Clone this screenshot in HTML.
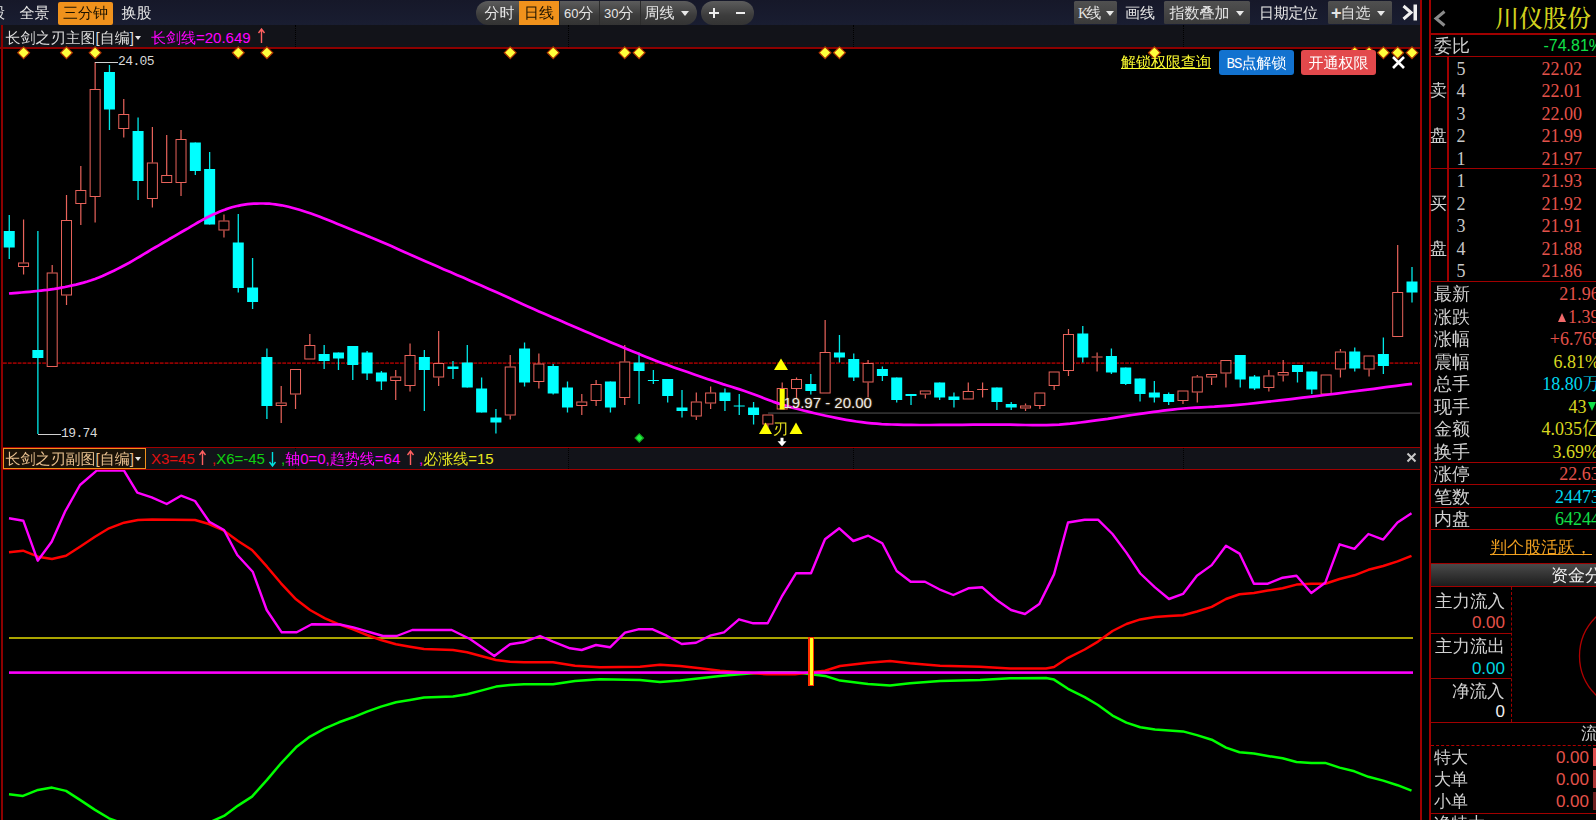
<!DOCTYPE html><html lang="zh"><head><meta charset="utf-8"><title>K线</title><style>
*{margin:0;padding:0;box-sizing:border-box}
html,body{width:1596px;height:820px;background:#000;overflow:hidden}
body{position:relative;font-family:"Liberation Sans","WenQuanYi Zen Hei","Noto Sans CJK SC",sans-serif;color:#d8d8d8;font-size:16px;line-height:1}
.abs{position:absolute;white-space:nowrap}
.t{position:absolute;white-space:nowrap;font-size:15px;line-height:20px;height:20px}
.hl{position:absolute;background:#a00000;height:1px}
.vl{position:absolute;background:#a00000;width:1px}
.gbtn{position:absolute;top:1px;height:23px;background:linear-gradient(#505050,#3a3a3a);border-radius:1.5px;color:#e4e4e4;font-size:15px;line-height:24px;padding-left:6px;white-space:nowrap}
.caret{display:inline-block;width:0;height:0;border-left:4.5px solid transparent;border-right:4.5px solid transparent;border-top:5px solid #e8e8e8;vertical-align:middle;margin-left:6px;position:relative;top:-1px}
.ser{font-family:"Liberation Serif","Noto Serif CJK SC",serif}
.rp .lab{position:absolute;left:1434px;font-size:18px;line-height:22px;color:#d0d0d0;white-space:nowrap}
.rp .val{position:absolute;right:0;font-size:18px;line-height:22px;white-space:nowrap;font-family:"Liberation Serif","Noto Serif CJK SC",serif}
.rp .num{position:absolute;left:1456.5px;font-size:18px;line-height:22px;color:#c8c8c8;font-family:"Liberation Serif",serif}
</style></head><body>
<div class="abs" style="left:0;top:0;width:1420px;height:25px;background:linear-gradient(#161829,#191d31)"></div>
<div class="abs" style="left:0;top:25px;width:1420px;height:22px;background:#121319"></div>
<div class="abs" style="left:3px;top:448px;width:1417px;height:21px;background:#121319"></div>
<svg width="1596" height="820" viewBox="0 0 1596 820" style="position:absolute;left:0;top:0"><defs><clipPath id="subclip"><rect x="0" y="469" width="1420" height="351"/></clipPath></defs><line x1="3" x2="1420" y1="363.1" y2="363.1" stroke="#900000" stroke-width="1.8" stroke-dasharray="3.8 1.1"/>
<rect x="768" y="412.2" width="652" height="1.8" fill="#2e2e2e"/>
<g><rect x="8.60" y="215.0" width="1.3" height="44.0" fill="#00e8e8"/><rect x="3.75" y="231.0" width="11" height="16.5" fill="#00ffff"/><rect x="22.96" y="219.5" width="1.2" height="43.0" fill="#e8635b"/><rect x="22.96" y="267.0" width="1.2" height="7.5" fill="#e8635b"/><rect x="18.56" y="263.0" width="10" height="3.5" fill="#000" stroke="#e8635b" stroke-width="1"/><rect x="37.23" y="231.0" width="1.3" height="203.0" fill="#00e8e8"/><rect x="32.38" y="350.0" width="11" height="8.0" fill="#00ffff"/><rect x="51.59" y="265.0" width="1.2" height="7.5" fill="#e8635b"/><rect x="47.19" y="273.0" width="10" height="93.5" fill="#000" stroke="#e8635b" stroke-width="1"/><rect x="65.91" y="195.0" width="1.2" height="25.0" fill="#e8635b"/><rect x="65.91" y="295.5" width="1.2" height="9.5" fill="#e8635b"/><rect x="61.51" y="220.5" width="10" height="74.5" fill="#000" stroke="#e8635b" stroke-width="1"/><rect x="80.22" y="166.0" width="1.2" height="24.0" fill="#e8635b"/><rect x="80.22" y="204.0" width="1.2" height="21.0" fill="#e8635b"/><rect x="75.82" y="190.5" width="10" height="13.0" fill="#000" stroke="#e8635b" stroke-width="1"/><rect x="94.53" y="62.0" width="1.2" height="27.0" fill="#e8635b"/><rect x="94.53" y="197.0" width="1.2" height="25.5" fill="#e8635b"/><rect x="90.13" y="89.5" width="10" height="107.0" fill="#000" stroke="#e8635b" stroke-width="1"/><rect x="108.80" y="65.0" width="1.3" height="65.0" fill="#00e8e8"/><rect x="103.95" y="72.0" width="11" height="37.5" fill="#00ffff"/><rect x="123.16" y="99.0" width="1.2" height="15.0" fill="#e8635b"/><rect x="123.16" y="129.0" width="1.2" height="8.5" fill="#e8635b"/><rect x="118.76" y="114.5" width="10" height="14.0" fill="#000" stroke="#e8635b" stroke-width="1"/><rect x="137.42" y="117.5" width="1.3" height="82.5" fill="#00e8e8"/><rect x="132.57" y="131.0" width="11" height="50.0" fill="#00ffff"/><rect x="151.79" y="127.0" width="1.2" height="35.5" fill="#e8635b"/><rect x="151.79" y="199.0" width="1.2" height="8.5" fill="#e8635b"/><rect x="147.39" y="163.0" width="10" height="35.5" fill="#000" stroke="#e8635b" stroke-width="1"/><rect x="166.10" y="135.0" width="1.2" height="40.0" fill="#e8635b"/><rect x="161.70" y="175.5" width="10" height="7.0" fill="#000" stroke="#e8635b" stroke-width="1"/><rect x="180.42" y="130.0" width="1.2" height="9.0" fill="#e8635b"/><rect x="180.42" y="183.0" width="1.2" height="13.0" fill="#e8635b"/><rect x="176.02" y="139.5" width="10" height="43.0" fill="#000" stroke="#e8635b" stroke-width="1"/><rect x="194.68" y="142.5" width="1.3" height="32.5" fill="#00e8e8"/><rect x="189.83" y="142.5" width="11" height="28.5" fill="#00ffff"/><rect x="208.99" y="152.0" width="1.3" height="72.5" fill="#00e8e8"/><rect x="204.14" y="169.0" width="11" height="55.5" fill="#00ffff"/><rect x="223.36" y="214.5" width="1.2" height="6.0" fill="#e8635b"/><rect x="223.36" y="230.5" width="1.2" height="7.0" fill="#e8635b"/><rect x="218.96" y="221.0" width="10" height="9.0" fill="#000" stroke="#e8635b" stroke-width="1"/><rect x="237.62" y="214.0" width="1.3" height="78.5" fill="#00e8e8"/><rect x="232.77" y="242.5" width="11" height="45.5" fill="#00ffff"/><rect x="251.93" y="258.0" width="1.3" height="51.0" fill="#00e8e8"/><rect x="247.08" y="287.5" width="11" height="14.5" fill="#00ffff"/><rect x="266.25" y="348.5" width="1.3" height="70.5" fill="#00e8e8"/><rect x="261.40" y="357.0" width="11" height="49.0" fill="#00ffff"/><rect x="280.61" y="386.0" width="1.2" height="16.5" fill="#e8635b"/><rect x="280.61" y="406.0" width="1.2" height="17.0" fill="#e8635b"/><rect x="276.21" y="403.0" width="10" height="2.5" fill="#000" stroke="#e8635b" stroke-width="1"/><rect x="294.93" y="394.5" width="1.2" height="14.5" fill="#e8635b"/><rect x="290.53" y="369.5" width="10" height="24.5" fill="#000" stroke="#e8635b" stroke-width="1"/><rect x="309.24" y="334.0" width="1.2" height="11.0" fill="#e8635b"/><rect x="304.84" y="345.5" width="10" height="13.5" fill="#000" stroke="#e8635b" stroke-width="1"/><rect x="323.50" y="345.0" width="1.3" height="24.0" fill="#00e8e8"/><rect x="318.65" y="354.0" width="11" height="7.0" fill="#00ffff"/><rect x="337.82" y="352.5" width="1.3" height="17.5" fill="#00e8e8"/><rect x="332.97" y="352.5" width="11" height="6.0" fill="#00ffff"/><rect x="352.13" y="346.0" width="1.3" height="34.0" fill="#00e8e8"/><rect x="347.28" y="346.0" width="11" height="19.0" fill="#00ffff"/><rect x="366.45" y="351.0" width="1.3" height="29.0" fill="#00e8e8"/><rect x="361.60" y="352.5" width="11" height="21.0" fill="#00ffff"/><rect x="380.76" y="371.0" width="1.3" height="19.0" fill="#00e8e8"/><rect x="375.91" y="372.5" width="11" height="9.0" fill="#00ffff"/><rect x="395.12" y="370.0" width="1.2" height="6.5" fill="#e8635b"/><rect x="395.12" y="381.0" width="1.2" height="19.0" fill="#e8635b"/><rect x="390.72" y="377.0" width="10" height="3.5" fill="#000" stroke="#e8635b" stroke-width="1"/><rect x="409.44" y="343.5" width="1.2" height="11.5" fill="#e8635b"/><rect x="409.44" y="386.0" width="1.2" height="5.5" fill="#e8635b"/><rect x="405.04" y="355.5" width="10" height="30.0" fill="#000" stroke="#e8635b" stroke-width="1"/><rect x="423.70" y="350.0" width="1.3" height="61.0" fill="#00e8e8"/><rect x="418.85" y="357.0" width="11" height="13.0" fill="#00ffff"/><rect x="438.06" y="331.0" width="1.2" height="32.0" fill="#e8635b"/><rect x="438.06" y="377.5" width="1.2" height="8.5" fill="#e8635b"/><rect x="433.66" y="363.5" width="10" height="13.5" fill="#000" stroke="#e8635b" stroke-width="1"/><rect x="452.33" y="361.0" width="1.3" height="18.0" fill="#00e8e8"/><rect x="447.48" y="366.5" width="11" height="2.5" fill="#00ffff"/><rect x="466.64" y="345.0" width="1.3" height="42.5" fill="#00e8e8"/><rect x="461.79" y="362.5" width="11" height="25.0" fill="#00ffff"/><rect x="480.96" y="377.5" width="1.3" height="35.0" fill="#00e8e8"/><rect x="476.11" y="388.5" width="11" height="24.0" fill="#00ffff"/><rect x="495.27" y="409.0" width="1.3" height="24.5" fill="#00e8e8"/><rect x="490.42" y="417.5" width="11" height="5.0" fill="#00ffff"/><rect x="509.63" y="355.0" width="1.2" height="11.5" fill="#e8635b"/><rect x="509.63" y="415.5" width="1.2" height="4.0" fill="#e8635b"/><rect x="505.23" y="367.0" width="10" height="48.0" fill="#000" stroke="#e8635b" stroke-width="1"/><rect x="523.90" y="342.5" width="1.3" height="44.0" fill="#00e8e8"/><rect x="519.05" y="348.5" width="11" height="34.0" fill="#00ffff"/><rect x="538.26" y="353.5" width="1.2" height="10.0" fill="#e8635b"/><rect x="538.26" y="382.0" width="1.2" height="6.5" fill="#e8635b"/><rect x="533.86" y="364.0" width="10" height="17.5" fill="#000" stroke="#e8635b" stroke-width="1"/><rect x="552.52" y="364.0" width="1.3" height="30.5" fill="#00e8e8"/><rect x="547.67" y="366.0" width="11" height="27.5" fill="#00ffff"/><rect x="566.84" y="381.5" width="1.3" height="31.0" fill="#00e8e8"/><rect x="561.99" y="387.5" width="11" height="20.0" fill="#00ffff"/><rect x="581.20" y="394.0" width="1.2" height="7.5" fill="#e8635b"/><rect x="581.20" y="406.0" width="1.2" height="9.0" fill="#e8635b"/><rect x="576.80" y="402.0" width="10" height="3.5" fill="#000" stroke="#e8635b" stroke-width="1"/><rect x="595.52" y="380.0" width="1.2" height="4.0" fill="#e8635b"/><rect x="595.52" y="401.0" width="1.2" height="5.0" fill="#e8635b"/><rect x="591.12" y="384.5" width="10" height="16.0" fill="#000" stroke="#e8635b" stroke-width="1"/><rect x="609.78" y="381.5" width="1.3" height="31.0" fill="#00e8e8"/><rect x="604.93" y="381.5" width="11" height="26.0" fill="#00ffff"/><rect x="624.14" y="345.0" width="1.2" height="16.5" fill="#e8635b"/><rect x="624.14" y="398.0" width="1.2" height="7.0" fill="#e8635b"/><rect x="619.74" y="362.0" width="10" height="35.5" fill="#000" stroke="#e8635b" stroke-width="1"/><rect x="638.41" y="352.5" width="1.3" height="51.5" fill="#00e8e8"/><rect x="633.56" y="362.5" width="11" height="8.5" fill="#00ffff"/><rect x="652.72" y="370.0" width="1.3" height="14.0" fill="#00e8e8"/><rect x="647.87" y="380.0" width="11" height="1.0" fill="#00ffff"/><rect x="667.03" y="379.0" width="1.3" height="23.5" fill="#00e8e8"/><rect x="662.18" y="379.0" width="11" height="17.0" fill="#00ffff"/><rect x="681.35" y="390.0" width="1.3" height="27.5" fill="#00e8e8"/><rect x="676.50" y="407.5" width="11" height="3.5" fill="#00ffff"/><rect x="695.71" y="392.5" width="1.2" height="9.0" fill="#e8635b"/><rect x="695.71" y="416.5" width="1.2" height="3.5" fill="#e8635b"/><rect x="691.31" y="402.0" width="10" height="14.0" fill="#000" stroke="#e8635b" stroke-width="1"/><rect x="710.03" y="386.5" width="1.2" height="6.0" fill="#e8635b"/><rect x="710.03" y="403.5" width="1.2" height="5.5" fill="#e8635b"/><rect x="705.63" y="393.0" width="10" height="10.0" fill="#000" stroke="#e8635b" stroke-width="1"/><rect x="724.29" y="388.5" width="1.3" height="22.5" fill="#00e8e8"/><rect x="719.44" y="392.5" width="11" height="8.5" fill="#00ffff"/><rect x="738.60" y="394.0" width="1.3" height="21.0" fill="#00e8e8"/><rect x="733.75" y="405.5" width="11" height="1.0" fill="#00ffff"/><rect x="752.92" y="402.0" width="1.3" height="22.5" fill="#00e8e8"/><rect x="748.07" y="407.5" width="11" height="7.5" fill="#00ffff"/><rect x="767.28" y="424.5" width="1.2" height="6.0" fill="#e8635b"/><rect x="762.88" y="415.0" width="10" height="9.0" fill="#000" stroke="#e8635b" stroke-width="1"/><rect x="781.60" y="382.5" width="1.2" height="5.5" fill="#e8635b"/><rect x="777.20" y="388.5" width="10" height="20.5" fill="#000" stroke="#e8635b" stroke-width="1"/><rect x="795.91" y="377.5" width="1.2" height="1.5" fill="#e8635b"/><rect x="795.91" y="389.0" width="1.2" height="10.0" fill="#e8635b"/><rect x="791.51" y="379.5" width="10" height="9.0" fill="#000" stroke="#e8635b" stroke-width="1"/><rect x="810.17" y="374.0" width="1.3" height="20.5" fill="#00e8e8"/><rect x="805.32" y="384.0" width="11" height="7.0" fill="#00ffff"/><rect x="824.54" y="320.0" width="1.2" height="32.0" fill="#e8635b"/><rect x="820.14" y="352.5" width="10" height="40.5" fill="#000" stroke="#e8635b" stroke-width="1"/><rect x="838.80" y="335.0" width="1.3" height="27.5" fill="#00e8e8"/><rect x="833.95" y="352.5" width="11" height="5.0" fill="#00ffff"/><rect x="853.11" y="353.5" width="1.3" height="27.5" fill="#00e8e8"/><rect x="848.26" y="359.0" width="11" height="18.5" fill="#00ffff"/><rect x="867.48" y="360.0" width="1.2" height="3.0" fill="#e8635b"/><rect x="867.48" y="382.5" width="1.2" height="15.0" fill="#e8635b"/><rect x="863.08" y="363.5" width="10" height="18.5" fill="#000" stroke="#e8635b" stroke-width="1"/><rect x="881.74" y="366.5" width="1.3" height="14.5" fill="#00e8e8"/><rect x="876.89" y="369.0" width="11" height="7.0" fill="#00ffff"/><rect x="896.06" y="377.5" width="1.3" height="25.0" fill="#00e8e8"/><rect x="891.21" y="377.5" width="11" height="22.5" fill="#00ffff"/><rect x="910.37" y="394.0" width="1.3" height="11.0" fill="#00e8e8"/><rect x="905.52" y="394.0" width="11" height="2.0" fill="#00ffff"/><rect x="924.73" y="394.5" width="1.2" height="4.0" fill="#e8635b"/><rect x="920.33" y="391.0" width="10" height="3.0" fill="#000" stroke="#e8635b" stroke-width="1"/><rect x="939.00" y="382.5" width="1.3" height="17.5" fill="#00e8e8"/><rect x="934.15" y="382.5" width="11" height="15.0" fill="#00ffff"/><rect x="953.31" y="392.5" width="1.3" height="15.0" fill="#00e8e8"/><rect x="948.46" y="396.5" width="11" height="3.5" fill="#00ffff"/><rect x="967.67" y="382.5" width="1.2" height="8.5" fill="#e8635b"/><rect x="963.27" y="391.5" width="10" height="7.5" fill="#000" stroke="#e8635b" stroke-width="1"/><rect x="981.99" y="382.5" width="1.2" height="6.5" fill="#e8635b"/><rect x="981.99" y="390.0" width="1.2" height="7.5" fill="#e8635b"/><rect x="977.09" y="389.0" width="11" height="1.0" fill="#e8635b"/><rect x="996.25" y="387.5" width="1.3" height="22.5" fill="#00e8e8"/><rect x="991.40" y="387.5" width="11" height="14.5" fill="#00ffff"/><rect x="1010.57" y="402.0" width="1.3" height="8.0" fill="#00e8e8"/><rect x="1005.72" y="404.0" width="11" height="3.5" fill="#00ffff"/><rect x="1024.93" y="403.5" width="1.2" height="2.0" fill="#e8635b"/><rect x="1024.93" y="408.5" width="1.2" height="2.5" fill="#e8635b"/><rect x="1020.53" y="406.0" width="10" height="2.0" fill="#000" stroke="#e8635b" stroke-width="1"/><rect x="1039.24" y="406.0" width="1.2" height="3.0" fill="#e8635b"/><rect x="1034.84" y="393.0" width="10" height="12.5" fill="#000" stroke="#e8635b" stroke-width="1"/><rect x="1053.56" y="386.0" width="1.2" height="4.0" fill="#e8635b"/><rect x="1049.16" y="372.0" width="10" height="13.5" fill="#000" stroke="#e8635b" stroke-width="1"/><rect x="1067.87" y="329.0" width="1.2" height="5.0" fill="#e8635b"/><rect x="1067.87" y="371.0" width="1.2" height="5.0" fill="#e8635b"/><rect x="1063.47" y="334.5" width="10" height="36.0" fill="#000" stroke="#e8635b" stroke-width="1"/><rect x="1082.13" y="326.0" width="1.3" height="36.5" fill="#00e8e8"/><rect x="1077.29" y="333.5" width="11" height="24.0" fill="#00ffff"/><rect x="1096.50" y="352.5" width="1.2" height="4.0" fill="#e8635b"/><rect x="1096.50" y="357.5" width="1.2" height="14.0" fill="#e8635b"/><rect x="1091.60" y="356.5" width="11" height="1.0" fill="#e8635b"/><rect x="1110.76" y="348.5" width="1.3" height="25.5" fill="#00e8e8"/><rect x="1105.91" y="356.0" width="11" height="16.5" fill="#00ffff"/><rect x="1125.08" y="367.5" width="1.3" height="17.5" fill="#00e8e8"/><rect x="1120.23" y="367.5" width="11" height="16.5" fill="#00ffff"/><rect x="1139.39" y="378.5" width="1.3" height="23.0" fill="#00e8e8"/><rect x="1134.54" y="378.5" width="11" height="15.5" fill="#00ffff"/><rect x="1153.70" y="381.0" width="1.3" height="21.5" fill="#00e8e8"/><rect x="1148.85" y="392.5" width="11" height="5.0" fill="#00ffff"/><rect x="1168.02" y="392.5" width="1.3" height="12.5" fill="#00e8e8"/><rect x="1163.17" y="394.0" width="11" height="8.0" fill="#00ffff"/><rect x="1182.38" y="401.0" width="1.2" height="3.0" fill="#e8635b"/><rect x="1177.98" y="391.0" width="10" height="9.5" fill="#000" stroke="#e8635b" stroke-width="1"/><rect x="1196.70" y="375.0" width="1.2" height="1.5" fill="#e8635b"/><rect x="1196.70" y="392.5" width="1.2" height="10.0" fill="#e8635b"/><rect x="1192.30" y="377.0" width="10" height="15.0" fill="#000" stroke="#e8635b" stroke-width="1"/><rect x="1211.01" y="377.5" width="1.2" height="7.5" fill="#e8635b"/><rect x="1206.61" y="374.5" width="10" height="2.5" fill="#000" stroke="#e8635b" stroke-width="1"/><rect x="1225.32" y="373.5" width="1.2" height="14.0" fill="#e8635b"/><rect x="1220.92" y="360.5" width="10" height="12.5" fill="#000" stroke="#e8635b" stroke-width="1"/><rect x="1239.59" y="355.0" width="1.3" height="32.5" fill="#00e8e8"/><rect x="1234.74" y="355.0" width="11" height="24.5" fill="#00ffff"/><rect x="1253.90" y="375.0" width="1.3" height="15.0" fill="#00e8e8"/><rect x="1249.05" y="376.5" width="11" height="12.0" fill="#00ffff"/><rect x="1268.26" y="370.0" width="1.2" height="5.5" fill="#e8635b"/><rect x="1268.26" y="388.0" width="1.2" height="3.5" fill="#e8635b"/><rect x="1263.86" y="376.0" width="10" height="11.5" fill="#000" stroke="#e8635b" stroke-width="1"/><rect x="1282.58" y="360.0" width="1.2" height="12.0" fill="#e8635b"/><rect x="1282.58" y="375.5" width="1.2" height="6.0" fill="#e8635b"/><rect x="1278.18" y="372.5" width="10" height="2.5" fill="#000" stroke="#e8635b" stroke-width="1"/><rect x="1296.84" y="365.0" width="1.3" height="17.5" fill="#00e8e8"/><rect x="1291.99" y="365.0" width="11" height="7.0" fill="#00ffff"/><rect x="1311.16" y="371.5" width="1.3" height="22.5" fill="#00e8e8"/><rect x="1306.31" y="371.5" width="11" height="18.0" fill="#00ffff"/><rect x="1321.12" y="375.0" width="10" height="19.0" fill="#000" stroke="#e8635b" stroke-width="1"/><rect x="1339.83" y="349.0" width="1.2" height="2.5" fill="#e8635b"/><rect x="1339.83" y="369.5" width="1.2" height="8.0" fill="#e8635b"/><rect x="1335.43" y="352.0" width="10" height="17.0" fill="#000" stroke="#e8635b" stroke-width="1"/><rect x="1354.10" y="347.5" width="1.3" height="24.0" fill="#00e8e8"/><rect x="1349.25" y="351.5" width="11" height="17.0" fill="#00ffff"/><rect x="1368.46" y="369.5" width="1.2" height="7.0" fill="#e8635b"/><rect x="1364.06" y="356.0" width="10" height="13.0" fill="#000" stroke="#e8635b" stroke-width="1"/><rect x="1382.72" y="337.5" width="1.3" height="36.5" fill="#00e8e8"/><rect x="1377.87" y="354.0" width="11" height="12.0" fill="#00ffff"/><rect x="1397.09" y="245.0" width="1.2" height="47.0" fill="#e8635b"/><rect x="1392.69" y="292.5" width="10" height="44.0" fill="#000" stroke="#e8635b" stroke-width="1"/><rect x="1411.35" y="267.0" width="1.3" height="35.5" fill="#00e8e8"/><rect x="1406.50" y="281.5" width="11" height="11.0" fill="#00ffff"/></g>
<polyline fill="none" stroke="#ff00ff" stroke-width="2.7" stroke-linejoin="round" points="9.0,293.5 11.2,293.3 14.1,293.1 17.6,292.8 21.5,292.5 25.6,292.2 29.8,291.8 33.8,291.4 37.5,291.0 41.0,290.6 44.4,290.2 47.8,289.8 51.2,289.3 54.5,288.9 58.0,288.3 61.4,287.7 65.0,287.0 68.6,286.2 72.3,285.4 76.1,284.6 79.8,283.6 83.6,282.6 87.4,281.5 91.2,280.3 95.0,279.0 98.8,277.6 102.5,276.0 106.2,274.3 110.0,272.6 113.8,270.8 117.5,268.9 121.2,267.0 125.0,265.0 128.8,263.0 132.5,260.9 136.2,258.7 140.0,256.5 143.8,254.2 147.5,252.0 151.2,249.7 155.0,247.5 158.8,245.3 162.6,243.0 166.5,240.8 170.3,238.5 174.1,236.3 177.9,234.1 181.5,232.0 185.0,230.0 188.4,228.1 191.6,226.1 194.7,224.3 197.8,222.5 200.8,220.8 203.9,219.1 206.9,217.5 210.0,216.0 213.1,214.6 216.2,213.2 219.4,211.8 222.5,210.6 225.6,209.4 228.8,208.3 231.9,207.3 235.0,206.5 238.1,205.8 241.2,205.2 244.4,204.7 247.5,204.2 250.6,203.9 253.8,203.7 256.9,203.6 260.0,203.5 263.1,203.5 266.1,203.6 269.2,203.7 272.2,204.0 275.3,204.3 278.4,204.8 281.6,205.3 285.0,206.0 288.5,206.8 292.0,207.7 295.7,208.7 299.4,209.8 303.2,211.0 307.0,212.2 311.0,213.6 315.0,215.0 319.2,216.5 323.5,218.2 328.0,220.0 332.5,221.8 337.0,223.7 341.5,225.5 345.8,227.3 350.0,229.0 353.8,230.5 357.4,231.9 360.7,233.2 364.0,234.6 367.4,235.9 371.1,237.5 375.3,239.2 380.0,241.2 385.4,243.5 391.3,246.1 397.6,248.9 404.3,251.9 411.1,254.9 417.9,257.9 424.7,260.9 431.2,263.8 437.6,266.6 444.0,269.4 450.4,272.1 456.8,274.9 463.2,277.6 469.6,280.4 476.0,283.2 482.4,286.0 488.9,288.9 495.5,291.8 502.2,294.8 508.8,297.8 515.3,300.8 521.7,303.7 527.8,306.4 533.6,309.0 538.9,311.4 543.8,313.5 548.4,315.5 552.8,317.4 557.2,319.3 561.8,321.3 566.7,323.4 572.0,325.7 577.9,328.2 584.2,330.9 590.9,333.8 597.6,336.7 604.4,339.6 611.1,342.4 617.4,345.0 623.3,347.5 628.6,349.7 633.5,351.7 638.1,353.6 642.5,355.4 646.9,357.2 651.5,359.0 656.4,360.9 661.7,362.9 667.6,365.1 674.0,367.4 680.7,369.7 687.5,372.1 694.3,374.5 700.9,376.7 707.2,378.9 712.9,380.8 718.1,382.5 722.8,384.1 727.3,385.5 731.5,386.8 735.6,388.1 739.7,389.4 743.8,390.8 748.0,392.2 752.2,393.7 756.4,395.3 760.4,396.8 764.5,398.4 768.6,400.0 772.9,401.6 777.3,403.1 782.0,404.6 787.0,406.1 792.3,407.6 797.8,409.0 803.4,410.5 809.0,411.9 814.6,413.2 820.2,414.5 825.6,415.7 830.8,416.8 836.0,417.9 841.1,418.9 846.1,419.8 851.2,420.7 856.3,421.5 861.5,422.2 866.8,422.8 871.9,423.3 876.8,423.7 881.6,424.1 886.5,424.3 891.7,424.5 897.4,424.7 903.8,424.8 911.2,424.9 919.8,425.0 929.5,425.0 940.1,424.9 951.1,424.9 962.3,424.8 973.2,424.7 983.6,424.6 993.0,424.6 1001.7,424.6 1009.9,424.7 1017.8,424.9 1025.4,425.0 1032.7,425.1 1039.7,425.1 1046.5,425.1 1053.0,424.9 1059.2,424.6 1064.8,424.2 1070.2,423.7 1075.3,423.1 1080.3,422.5 1085.3,421.8 1090.5,421.1 1096.0,420.4 1101.8,419.6 1107.7,418.8 1113.8,417.8 1120.0,416.9 1126.1,415.9 1132.1,415.0 1137.9,414.1 1143.5,413.3 1148.7,412.6 1153.6,411.9 1158.3,411.3 1162.9,410.7 1167.5,410.1 1172.4,409.6 1177.6,409.0 1183.2,408.5 1189.1,408.0 1195.1,407.7 1201.2,407.3 1207.6,407.0 1214.4,406.7 1221.7,406.2 1229.5,405.6 1238.0,404.9 1247.3,404.0 1257.5,402.9 1268.3,401.7 1279.5,400.4 1291.0,399.1 1302.5,397.7 1313.9,396.3 1325.0,395.0 1336.5,393.6 1348.8,392.0 1361.4,390.4 1373.9,388.8 1385.7,387.2 1396.4,385.8 1405.3,384.6 1412.0,383.8"/>
<rect x="779.70" y="389.0" width="5" height="20.5" fill="#ffff00"/>
<g shape-rendering="crispEdges"><rect x="95" y="62" width="23" height="1" fill="#d0d0d0"/><rect x="38" y="434" width="23" height="1" fill="#d0d0d0"/></g>
<polygon points="639.3,433.8 643.5,438 639.3,442.2 635.0999999999999,438" fill="#22f040" stroke="#10a020" stroke-width="1.2" stroke-linejoin="miter"/>
<polygon points="781,358.5 788.0,370.0 774.0,370.0" fill="#ffff00"/>
<polygon points="765.5,422.5 772.0,434.0 759.0,434.0" fill="#ffff00"/>
<polygon points="796,422.5 802.5,434.0 789.5,434.0" fill="#ffff00"/>
<polygon points="780.5,437.8 783.5,437.8 783.5,441.3 786.5,441.3 782,446.3 777.5,441.3 780.5,441.3" fill="#fff"/>
<rect x="9" y="637.2" width="1404" height="1.6" fill="#d4cc00"/>
<g clip-path="url(#subclip)">
<polyline fill="none" stroke="#00ff00" stroke-width="2.5" stroke-linejoin="round" points="9.0,794.3 23.0,795.9 38.0,789.9 52.0,787.6 66.0,790.9 80.0,799.9 95.0,809.9 109.0,818.3 124.0,823.9 138.0,826.6 152.0,827.1 195.0,826.6 209.0,822.6 224.0,815.9 238.0,805.6 252.0,796.6 267.0,779.9 281.0,763.3 296.0,747.3 310.0,736.6 325.0,728.3 339.0,722.3 353.0,717.3 367.0,711.6 381.0,706.6 396.0,702.3 410.0,699.9 424.0,697.6 453.0,696.6 467.0,694.3 481.0,690.6 496.0,686.6 510.0,684.9 524.0,684.3 553.0,684.3 575.0,680.9 600.0,679.3 640.0,679.9 660.0,681.9 680.0,680.6 700.0,678.3 720.0,675.9 740.0,674.3 767.0,672.3 795.0,672.3 811.0,674.3 825.0,675.9 840.0,680.6 868.0,683.9 890.0,685.6 910.0,683.3 940.0,680.9 980.0,679.9 1010.0,678.2 1046.0,678.0 1054.0,679.6 1068.0,688.8 1084.7,697.1 1098.0,705.0 1112.5,715.6 1126.4,722.6 1140.3,727.2 1155.0,729.6 1169.0,730.5 1183.0,731.4 1196.9,735.1 1211.7,739.7 1226.0,747.6 1239.5,752.3 1253.9,753.6 1267.8,756.0 1282.6,758.3 1296.5,762.0 1311.3,762.9 1325.2,762.9 1339.6,767.6 1354.4,771.3 1368.4,776.8 1383.2,780.6 1397.5,785.2 1411.5,790.7"/>
<polyline fill="none" stroke="#ff0000" stroke-width="2.5" stroke-linejoin="round" points="9.0,552.3 23.0,550.7 38.0,556.7 52.0,559.0 66.0,555.7 80.0,546.7 95.0,536.7 109.0,528.3 124.0,522.7 138.0,520.0 152.0,519.5 195.0,520.0 209.0,524.0 224.0,530.7 238.0,541.0 252.0,550.0 267.0,566.7 281.0,583.3 296.0,599.3 310.0,610.0 325.0,618.3 339.0,624.3 353.0,629.3 367.0,635.0 381.0,640.0 396.0,644.3 410.0,646.7 424.0,649.0 453.0,650.0 467.0,652.3 481.0,656.0 496.0,660.0 510.0,661.7 524.0,662.3 553.0,662.3 575.0,665.7 600.0,667.3 640.0,666.7 660.0,664.7 680.0,666.0 700.0,668.3 720.0,670.7 740.0,672.3 767.0,674.3 795.0,674.3 811.0,672.3 825.0,670.7 840.0,666.0 868.0,662.7 890.0,661.0 910.0,663.3 940.0,665.7 980.0,666.7 1010.0,668.4 1046.0,668.6 1054.0,667.0 1068.0,657.8 1084.7,649.5 1098.0,641.6 1112.5,631.0 1126.4,624.0 1140.3,619.4 1155.0,617.0 1169.0,616.1 1183.0,615.2 1196.9,611.5 1211.7,606.9 1226.0,599.0 1239.5,594.3 1253.9,593.0 1267.8,590.6 1282.6,588.3 1296.5,584.6 1311.3,583.7 1325.2,583.7 1339.6,579.0 1354.4,575.3 1368.4,569.8 1383.2,566.0 1397.5,561.4 1411.5,555.9"/>
<rect x="9" y="671.3" width="1404" height="2.6" fill="#ff00ff"/>
<polyline fill="none" stroke="#ff00ff" stroke-width="2.4" stroke-linejoin="round" points="9.0,518.3 23.3,520.7 37.7,560.7 51.7,541.7 65.0,511.7 80.0,485.0 96.7,470.6 124.0,470.6 137.3,492.7 151.7,497.3 166.7,504.0 181.0,495.7 195.0,501.0 209.3,521.7 224.0,530.0 237.3,555.0 252.7,571.7 266.7,610.0 281.7,632.3 296.7,632.3 311.7,624.3 340.0,624.5 353.3,627.3 383.0,636.0 396.7,636.0 412.3,630.0 451.7,630.0 470.0,639.0 494.3,656.0 510.0,644.3 523.3,642.3 540.0,636.0 553.0,641.7 570.0,648.3 581.7,650.0 596.0,645.0 610.0,647.3 625.0,632.7 638.3,629.3 652.7,629.3 666.7,635.7 681.7,644.0 696.0,642.7 710.0,635.7 724.0,632.3 739.0,619.3 753.3,623.3 767.7,623.3 781.7,596.7 796.0,573.3 811.0,573.3 825.0,539.3 839.3,528.3 853.3,541.0 868.3,535.7 882.3,543.3 896.7,571.0 910.7,581.7 925.0,581.7 939.3,589.3 953.3,595.0 968.3,588.3 982.3,587.3 996.7,600.0 1011.0,610.0 1025.0,614.0 1039.3,604.0 1054.0,574.4 1068.0,522.5 1084.7,519.7 1098.0,519.7 1112.5,534.0 1126.4,552.6 1140.3,573.5 1155.0,587.4 1169.0,599.0 1183.0,593.9 1196.9,575.8 1211.7,565.1 1226.0,545.7 1239.5,553.6 1253.9,583.7 1267.8,583.7 1282.6,577.7 1296.5,575.8 1311.3,593.0 1325.2,582.8 1339.6,544.3 1354.4,548.9 1368.4,534.0 1383.2,539.6 1397.5,522.5 1411.5,513.2"/>
</g>
<g shape-rendering="crispEdges"><rect x="808" y="637" width="6" height="49" fill="#ff3000"/><rect x="809.5" y="638" width="3" height="47" fill="#ffff20"/></g></svg>
<div class="abs" style="left:0;top:47px;width:1420px;height:2px;background:#8c0000"></div>
<div class="abs" style="left:1px;top:25px;width:2px;height:795px;background:#8c0000"></div>
<div class="abs" style="left:1420.1px;top:0;width:1.8px;height:820px;background:#a00000"></div>
<div class="abs" style="left:3px;top:447px;width:1417px;height:1px;background:#a00000"></div>
<div class="abs" style="left:3px;top:469px;width:1417px;height:1px;background:#a00000"></div>
<svg width="1420" height="70" viewBox="0 0 1420 70" style="position:absolute;left:0;top:0"><polygon points="23.6,46.800000000000004 29.5,52.7 23.6,58.6 17.700000000000003,52.7" fill="#ffff3c" stroke="#b03400" stroke-width="1.2" stroke-linejoin="miter"/><polygon points="66.5,46.800000000000004 72.4,52.7 66.5,58.6 60.6,52.7" fill="#ffff3c" stroke="#b03400" stroke-width="1.2" stroke-linejoin="miter"/><polygon points="95.1,46.800000000000004 101.0,52.7 95.1,58.6 89.19999999999999,52.7" fill="#ffff3c" stroke="#b03400" stroke-width="1.2" stroke-linejoin="miter"/><polygon points="238.3,46.800000000000004 244.20000000000002,52.7 238.3,58.6 232.4,52.7" fill="#ffff3c" stroke="#b03400" stroke-width="1.2" stroke-linejoin="miter"/><polygon points="266.9,46.800000000000004 272.79999999999995,52.7 266.9,58.6 261.0,52.7" fill="#ffff3c" stroke="#b03400" stroke-width="1.2" stroke-linejoin="miter"/><polygon points="510.2,46.800000000000004 516.1,52.7 510.2,58.6 504.3,52.7" fill="#ffff3c" stroke="#b03400" stroke-width="1.2" stroke-linejoin="miter"/><polygon points="553.2,46.800000000000004 559.1,52.7 553.2,58.6 547.3000000000001,52.7" fill="#ffff3c" stroke="#b03400" stroke-width="1.2" stroke-linejoin="miter"/><polygon points="624.7,46.800000000000004 630.6,52.7 624.7,58.6 618.8000000000001,52.7" fill="#ffff3c" stroke="#b03400" stroke-width="1.2" stroke-linejoin="miter"/><polygon points="639.1,46.800000000000004 645.0,52.7 639.1,58.6 633.2,52.7" fill="#ffff3c" stroke="#b03400" stroke-width="1.2" stroke-linejoin="miter"/><polygon points="825.1,46.800000000000004 831.0,52.7 825.1,58.6 819.2,52.7" fill="#ffff3c" stroke="#b03400" stroke-width="1.2" stroke-linejoin="miter"/><polygon points="839.5,46.800000000000004 845.4,52.7 839.5,58.6 833.6,52.7" fill="#ffff3c" stroke="#b03400" stroke-width="1.2" stroke-linejoin="miter"/><polygon points="1154.4,46.800000000000004 1160.3000000000002,52.7 1154.4,58.6 1148.5,52.7" fill="#ffff3c" stroke="#b03400" stroke-width="1.2" stroke-linejoin="miter"/><polygon points="1354.7,46.800000000000004 1360.6000000000001,52.7 1354.7,58.6 1348.8,52.7" fill="#ffff3c" stroke="#b03400" stroke-width="1.2" stroke-linejoin="miter"/><polygon points="1369.1,46.800000000000004 1375.0,52.7 1369.1,58.6 1363.1999999999998,52.7" fill="#ffff3c" stroke="#b03400" stroke-width="1.2" stroke-linejoin="miter"/><polygon points="1383.4,46.800000000000004 1389.3000000000002,52.7 1383.4,58.6 1377.5,52.7" fill="#ffff3c" stroke="#b03400" stroke-width="1.2" stroke-linejoin="miter"/><polygon points="1397.7,46.800000000000004 1403.6000000000001,52.7 1397.7,58.6 1391.8,52.7" fill="#ffff3c" stroke="#b03400" stroke-width="1.2" stroke-linejoin="miter"/><polygon points="1412.0,46.800000000000004 1417.9,52.7 1412.0,58.6 1406.1,52.7" fill="#ffff3c" stroke="#b03400" stroke-width="1.2" stroke-linejoin="miter"/></svg>
<div class="abs" style="left:295px;top:25px;width:0;height:22px;border-left:1px dotted #000"></div>
<div class="abs" style="left:295px;top:448px;width:0;height:21px;border-left:1px dotted #000"></div>
<div class="abs" style="left:568px;top:25px;width:0;height:22px;border-left:1px dotted #000"></div>
<div class="abs" style="left:568px;top:448px;width:0;height:21px;border-left:1px dotted #000"></div>
<div class="abs" style="left:853px;top:25px;width:0;height:22px;border-left:1px dotted #000"></div>
<div class="abs" style="left:853px;top:448px;width:0;height:21px;border-left:1px dotted #000"></div>
<div class="abs" style="left:1183px;top:25px;width:0;height:22px;border-left:1px dotted #000"></div>
<div class="abs" style="left:1183px;top:448px;width:0;height:21px;border-left:1px dotted #000"></div>
<div class="t" style="left:-10px;top:3px;color:#e6e6e6">股</div>
<div class="t" style="left:19.5px;top:3px;color:#e6e6e6">全景</div>
<div class="abs" style="left:57.5px;top:1.5px;width:55.5px;height:23px;background:#f0921c;border-radius:2px"></div>
<div class="t" style="left:63px;top:3px;color:#1a1200">三分钟</div>
<div class="t" style="left:121.5px;top:3px;color:#e6e6e6">换股</div>
<div class="abs" style="left:476px;top:1px;width:221px;height:24px;border-radius:12px;background:linear-gradient(#5c5c5c,#3c3c3c 60%,#333);overflow:hidden"><div class="abs" style="left:43px;top:0;width:40px;height:24px;background:#f0921c"></div><div class="abs" style="left:83px;top:0;width:1px;height:24px;background:#2c2c2c"></div><div class="abs" style="left:123px;top:0;width:1px;height:24px;background:#2c2c2c"></div><div class="abs" style="left:164px;top:0;width:1px;height:24px;background:#2c2c2c"></div></div>
<div class="t" style="left:484.5px;top:3px;color:#e6e6e6">分时</div>
<div class="t" style="left:524px;top:3px;color:#1a1200">日线</div>
<div class="t" style="left:564px;top:3px;color:#e6e6e6"><span style="font-size:13px">60</span>分</div>
<div class="t" style="left:604px;top:3px;color:#e6e6e6"><span style="font-size:13px">30</span>分</div>
<div class="t" style="left:644.5px;top:3px;color:#e6e6e6">周线<span class="caret"></span></div>
<div class="abs" style="left:701px;top:1px;width:53px;height:24px;border-radius:12px;background:linear-gradient(#5c5c5c,#3c3c3c 60%,#333)"></div>
<div class="abs" style="left:709px;top:11.5px;width:10px;height:2.5px;background:#eee"></div><div class="abs" style="left:712.75px;top:7.75px;width:2.5px;height:10px;background:#eee"></div>
<div class="abs" style="left:735.5px;top:11.5px;width:9.5px;height:2.5px;background:#eee"></div>
<div class="gbtn" style="left:1074px;width:43px;padding-left:4px"><span style="font-size:14.5px;font-family:'Liberation Serif',serif;letter-spacing:-2.2px">K</span>线<span class="caret" style="margin-left:5px"></span></div>
<div class="t" style="left:1125px;top:3px;color:#e6e6e6">画线</div>
<div class="gbtn" style="left:1164px;width:86px;padding-left:5.5px">指数叠加<span class="caret"></span></div>
<div class="t" style="left:1259px;top:3px;color:#e6e6e6;letter-spacing:-0.3px">日期定位</div>
<div class="gbtn" style="left:1328px;width:64px;padding-left:3px"><b style="font-family:'Liberation Sans';font-size:18px;line-height:10px;letter-spacing:-1px;position:relative;top:1px">+</b>自选<span class="caret"></span></div>
<svg class="abs" style="left:1402px;top:4px" width="17" height="17" viewBox="0 0 17 17"><path d="M1.5 2 L9 8.5 L1.5 15" fill="none" stroke="#f0f0f0" stroke-width="3"/><rect x="11.5" y="0.5" width="3.5" height="16" fill="#f0f0f0"/></svg>
<div class="t" style="left:5.5px;top:27.5px;color:#dcdcdc">长剑之刃主图[自编]<span class="caret" style="border-left-width:3.5px;border-right-width:3.5px;border-top-width:4.5px;margin-left:1.5px"></span></div>
<div class="t" style="left:151px;top:27.5px;color:#ff00ff;font-size:15px">长剑线=20.649</div>
<svg class="abs" style="left:257px;top:28px" width="9" height="16" viewBox="0 0 9 16"><path d="M4.5 1 V15 M1.5 5 L4.5 1 L7.5 5" stroke="#ff6060" stroke-width="1.4" fill="none"/></svg>
<div class="abs" style="left:118px;top:54px;font:13px/16px 'Liberation Mono',monospace;color:#d8d8d8;letter-spacing:-0.6px">24.05</div>
<div class="abs" style="left:61px;top:426px;font:13px/16px 'Liberation Mono',monospace;color:#d8d8d8;letter-spacing:-0.6px">19.74</div>
<div class="abs" style="left:783.5px;top:394px;font:15px/18px 'Liberation Sans',sans-serif;color:#e8e8e8;text-shadow:0 0 2px #a07030">19.97 - 20.00</div>
<div class="abs" style="left:773px;top:420px;font-size:15px;line-height:18px;color:#e8e020">刃</div>
<div class="abs" style="left:1121px;top:52px;font-size:15px;line-height:19px;color:#ffff30;text-decoration:underline">解锁权限查询</div>
<div class="abs" style="left:1219px;top:50px;width:75px;height:25px;border-radius:3px;background:#1272cf;color:#fff;font-size:15px;line-height:25px;text-align:center"><span style="font-family:'Liberation Mono',monospace;font-size:14px;letter-spacing:-1px">BS</span>点解锁</div>
<div class="abs" style="left:1301px;top:50px;width:75px;height:25px;border-radius:3px;background:#e2494c;color:#fff;font-size:15px;line-height:25px;text-align:center">开通权限</div>
<svg class="abs" style="left:1391px;top:55px" width="15" height="15" viewBox="0 0 15 15"><path d="M2 2 L13 13 M13 2 L2 13" stroke="#fff" stroke-width="2.6"/></svg>
<div class="abs" style="left:3px;top:448px;width:143px;height:21px;border:1px solid #f0921c;background:#1a1208"></div>
<div class="t" style="left:5.5px;top:449px;color:#e8c090">长剑之刃副图[自编]<span class="caret" style="border-left-width:3.5px;border-right-width:3.5px;border-top-width:4.5px;margin-left:1.5px"></span></div>
<div class="t" style="left:151px;top:449px;font-size:15px"><span style="color:#e01010">X3=45</span></div>
<div class="t" style="left:212px;top:449px;font-size:15px"><span style="color:#e01010">,</span><span style="color:#10d010">X6=-45</span></div>
<div class="t" style="left:281px;top:449px;font-size:15px"><span style="color:#10d010">,</span><span style="color:#ff00ff">轴0=0,趋势线=64</span></div>
<div class="t" style="left:419px;top:449px;font-size:15px"><span style="color:#ff00ff">,</span><span style="color:#e8e820">必涨线=15</span></div>
<svg class="abs" style="left:198px;top:450px" width="9" height="16" viewBox="0 0 9 16"><path d="M4.5 1 V15 M1.5 5 L4.5 1 L7.5 5" stroke="#ff6060" stroke-width="1.4" fill="none"/></svg>
<svg class="abs" style="left:268px;top:451px" width="9" height="16" viewBox="0 0 9 16"><path d="M4.5 1 V15 M1.5 11 L4.5 15 L7.5 11" stroke="#00e0e0" stroke-width="1.4" fill="none"/></svg>
<svg class="abs" style="left:406px;top:450px" width="9" height="16" viewBox="0 0 9 16"><path d="M4.5 1 V15 M1.5 5 L4.5 1 L7.5 5" stroke="#ff6060" stroke-width="1.4" fill="none"/></svg>
<svg class="abs" style="left:1406px;top:452px" width="11" height="11" viewBox="0 0 11 11"><path d="M1.5 1.5 L9.5 9.5 M9.5 1.5 L1.5 9.5" stroke="#c8c8c8" stroke-width="2"/></svg>
<div class="rp">
<div class="abs" style="left:1429px;top:0;width:1.5px;height:820px;background:#a00000"></div>
<div class="abs" style="left:1431px;top:33px;width:165px;height:2px;background:#a00000"></div>
<div class="hl" style="left:1431px;top:56px;width:165px"></div>
<div class="hl" style="left:1431px;top:168px;width:165px"></div>
<div class="hl" style="left:1431px;top:281px;width:165px"></div>
<div class="hl" style="left:1431px;top:462px;width:165px"></div>
<div class="hl" style="left:1431px;top:484px;width:165px"></div>
<div class="hl" style="left:1431px;top:507px;width:165px"></div>
<div class="hl" style="left:1431px;top:529px;width:165px"></div>
<div class="hl" style="left:1431px;top:563px;width:165px"></div>
<div class="hl" style="left:1431px;top:586px;width:165px"></div>
<div class="hl" style="left:1431px;top:722px;width:165px"></div>
<div class="hl" style="left:1431px;top:813px;width:165px"></div>
<div class="vl" style="left:1447px;top:57px;width:2px;height:225px"></div>
<svg class="abs" style="left:1433px;top:10px" width="14" height="17" viewBox="0 0 14 17"><path d="M11.5 1.5 L3 8.5 L11.5 15.5" fill="none" stroke="#8a8a8a" stroke-width="3"/></svg>
<div class="abs ser" style="left:1495px;top:4.5px;font-size:24px;line-height:28px;color:#d2d21e;letter-spacing:0px;font-weight:500">川仪股份</div>
<div class="lab" style="top:35px">委比</div>
<div class="val" style="top:35px;color:#10e048;right:-7px;font-family:'Liberation Sans',sans-serif;font-size:16px">-74.81%</div>
<div class="num" style="top:57.5px">5</div>
<div class="val" style="top:57.5px;right:14px;color:#e4524a">22.02</div>
<div class="num" style="top:80.0px">4</div>
<div class="val" style="top:80.0px;right:14px;color:#e4524a">22.01</div>
<div class="num" style="top:102.5px">3</div>
<div class="val" style="top:102.5px;right:14px;color:#e4524a">22.00</div>
<div class="num" style="top:125.0px">2</div>
<div class="val" style="top:125.0px;right:14px;color:#e4524a">21.99</div>
<div class="num" style="top:147.5px">1</div>
<div class="val" style="top:147.5px;right:14px;color:#e4524a">21.97</div>
<div class="num" style="top:170.0px">1</div>
<div class="val" style="top:170.0px;right:14px;color:#e4524a">21.93</div>
<div class="num" style="top:192.5px">2</div>
<div class="val" style="top:192.5px;right:14px;color:#e4524a">21.92</div>
<div class="num" style="top:215.0px">3</div>
<div class="val" style="top:215.0px;right:14px;color:#e4524a">21.91</div>
<div class="num" style="top:237.5px">4</div>
<div class="val" style="top:237.5px;right:14px;color:#e4524a">21.88</div>
<div class="num" style="top:260.0px">5</div>
<div class="val" style="top:260.0px;right:14px;color:#e4524a">21.86</div>
<div class="abs" style="left:1430px;top:81px;font-size:17px;line-height:20px;color:#d0d0d0">卖</div>
<div class="abs" style="left:1430px;top:126px;font-size:17px;line-height:20px;color:#d0d0d0">盘</div>
<div class="abs" style="left:1430px;top:194px;font-size:17px;line-height:20px;color:#d0d0d0">买</div>
<div class="abs" style="left:1430px;top:239px;font-size:17px;line-height:20px;color:#d0d0d0">盘</div>
<div class="lab" style="top:283px">最新</div>
<div class="val" style="top:283px;color:#e4524a;right:-3.8px">21.96</div>
<div class="lab" style="top:305.5px">涨跌</div>
<div class="val" style="top:305.5px;color:#e4524a;right:-3.5px"><span style="display:inline-block;width:0;height:0;border-left:4.7px solid transparent;border-right:4.7px solid transparent;border-bottom:9.5px solid #f06a6a;margin-right:2px;position:relative;top:-1px"></span>1.39</div>
<div class="lab" style="top:328px">涨幅</div>
<div class="val" style="top:328px;color:#e4524a;right:-10.5px">+6.76%</div>
<div class="lab" style="top:350.5px">震幅</div>
<div class="val" style="top:350.5px;color:#d8d820;right:-4px">6.81%</div>
<div class="lab" style="top:373px">总手</div>
<div class="val" style="top:373px;color:#00d8f0;right:-4.8px">18.80万</div>
<div class="lab" style="top:395.5px">现手</div>
<div class="val" style="top:395.5px;color:#d8d820;left:1568.5px;right:auto">43</div>
<div class="abs" style="top:402.0px;left:1587.5px;width:0;height:0;border-left:4.5px solid transparent;border-right:4.5px solid transparent;border-top:9px solid #10e048"></div>
<div class="lab" style="top:418px">金额</div>
<div class="val" style="top:418px;color:#d8d820;right:-4px">4.035亿</div>
<div class="lab" style="top:440.5px">换手</div>
<div class="val" style="top:440.5px;color:#d8d820;right:-3px">3.69%</div>
<div class="lab" style="top:463px">涨停</div>
<div class="val" style="top:463px;color:#e4524a;right:-3.8px">22.63</div>
<div class="lab" style="top:485.5px">笔数</div>
<div class="val" style="top:485.5px;color:#00d8f0;right:-4px">24473</div>
<div class="lab" style="top:508px">内盘</div>
<div class="val" style="top:508px;color:#10e048;right:-4px">64244</div>
<div class="abs" style="left:1490px;top:538px;font-size:17px;line-height:20px;color:#f0a020;text-decoration:underline">判个股活跃，</div>
<div class="abs" style="left:1431px;top:564px;width:165px;height:22px;background:linear-gradient(#4a4a4a,#1c1c1c)"></div>
<div class="abs" style="left:1551px;top:566px;font-size:17px;line-height:20px;color:#f0f0f0">资金分</div>
<div class="abs" style="left:1511px;top:587px;width:0;height:135px;border-left:1px dashed #a00000"></div>
<div class="hl" style="left:1431px;top:633px;width:80px"></div>
<div class="hl" style="left:1431px;top:678px;width:80px"></div>
<div class="abs" style="left:1435px;top:590.5px;font-size:17.5px;line-height:20px;color:#d0d0d0">主力流入</div>
<div class="abs ser" style="left:1435px;width:70px;text-align:right;top:613px;font-size:17px;line-height:20px;color:#e4524a;font-family:'Liberation Sans'">0.00</div>
<div class="abs" style="left:1435px;top:636px;font-size:17.5px;line-height:20px;color:#d0d0d0">主力流出</div>
<div class="abs" style="left:1435px;width:70px;text-align:right;top:658.5px;font-size:17px;line-height:20px;color:#00d8e0;font-family:'Liberation Sans'">0.00</div>
<div class="abs" style="left:1452px;top:681px;font-size:17.5px;line-height:20px;color:#d0d0d0">净流入</div>
<div class="abs" style="left:1435px;width:70px;text-align:right;top:702px;font-size:17px;line-height:20px;color:#f0f0f0;font-family:'Liberation Sans'">0</div>
<svg class="abs" style="left:1560px;top:590px" width="36" height="130" viewBox="1560 590 36 130"><circle cx="1634" cy="656" r="54.5" fill="none" stroke="#b00000" stroke-width="1.3"/></svg>
<div class="abs" style="left:1581px;top:724px;font-size:17px;line-height:20px;color:#d0d0d0">流</div>
<div class="abs" style="left:1431px;top:745px;width:165px;height:0;border-top:1px dashed #b00000"></div>
<div class="lab" style="top:747px;font-size:17px">特大</div>
<div class="abs" style="right:7px;top:747px;font-size:17px;line-height:22px;color:#e4524a;font-family:'Liberation Sans'">0.00</div>
<div class="abs" style="left:1593px;top:748px;width:3px;height:18px;background:#e05050"></div>
<div class="lab" style="top:769px;font-size:17px">大单</div>
<div class="abs" style="right:7px;top:769px;font-size:17px;line-height:22px;color:#e4524a;font-family:'Liberation Sans'">0.00</div>
<div class="abs" style="left:1593px;top:770px;width:3px;height:18px;background:#b03838"></div>
<div class="lab" style="top:791px;font-size:17px">小单</div>
<div class="abs" style="right:7px;top:791px;font-size:17px;line-height:22px;color:#e4524a;font-family:'Liberation Sans'">0.00</div>
<div class="abs" style="left:1593px;top:792px;width:3px;height:18px;background:#702020"></div>
<div class="lab" style="top:813px;font-size:17px">净特大</div>
</div>
</body></html>
